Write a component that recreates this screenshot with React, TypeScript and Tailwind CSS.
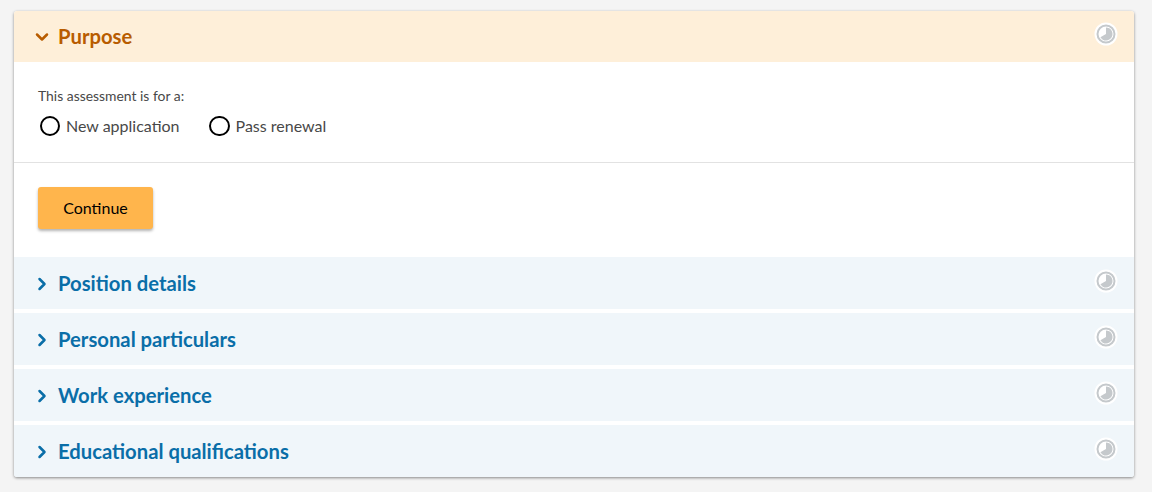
import { ChevronDown, ChevronRight } from "lucide-react";

function ProgressIcon() {
  return (
    <svg width="24" height="24" viewBox="0 0 24 24" className="shrink-0">
      <circle cx="12" cy="12" r="11.5" fill="#fff" />
      <circle cx="12" cy="12" r="8.5" fill="none" stroke="#c5c9cc" strokeWidth="2" />
      <path d="M12 5.5A6.5 6.5 0 1 1 6.4 15.3L12 12Z" fill="#c5c9cc" />
    </svg>
  );
}

function Section({ title }: { title: string }) {
  return (
    <div className="flex h-[52px] items-center justify-between bg-[#f0f6fa] pl-[18px] pr-[16px]">
      <div className="flex items-center gap-[6px]">
        <ChevronRight className="mt-[2px] h-[20px] w-[20px] text-[#0a6ea8]" strokeWidth={3} />
        <h2 className="text-[20.25px] font-bold text-[#0a6ea8]">{title}</h2>
      </div>
      <div className="-mt-[4px]">
        <ProgressIcon />
      </div>
    </div>
  );
}

function Radio({ label }: { label: string }) {
  return (
    <label className="flex items-center gap-[6px] text-[16px] text-[#484848]">
      <span className="h-[20.5px] w-[20.5px] rounded-full border-2 border-black bg-white" />
      {label}
    </label>
  );
}

export default function App() {
  return (
    <div className="h-[492px] overflow-hidden bg-[#f4f4f4] pl-[14px] pr-[18px] pt-[11px] font-['Lato','Open_Sans',sans-serif]">
      <div className="overflow-hidden rounded-[3px] bg-white shadow-[0_1px_3px_rgba(0,0,0,0.45)]">
        <div className="flex h-[51px] items-center justify-between bg-[#feefd9] pl-[18px] pr-[16px]">
          <div className="flex items-center gap-[6px]">
            <ChevronDown className="h-[20px] w-[20px] text-[#b85c00]" strokeWidth={3} />
            <h2 className="text-[20.25px] font-bold text-[#b85c00]">Purpose</h2>
          </div>
          <div className="-mt-[6px]">
            <ProgressIcon />
          </div>
        </div>
        <div className="h-[101px] border-b border-[#e2e2e2] pl-[24px] pt-[25px]">
          <p className="text-[13.9px] leading-[18px] text-[#484848]">This assessment is for a:</p>
          <div className="mt-[9px] flex items-center gap-[29.5px] pl-[1.5px]">
            <Radio label="New application" />
            <Radio label="Pass renewal" />
          </div>
        </div>
        <div className="h-[94px] pl-[24px] pt-[24px]">
          <button className="h-[42px] w-[115px] rounded-[3px] bg-[#ffb54c] text-[16px] text-black shadow-[0_2px_3px_rgba(0,0,0,0.3)]">
            Continue
          </button>
        </div>
        <div className="flex flex-col gap-[4px]">
          <Section title="Position details" />
          <Section title="Personal particulars" />
          <Section title="Work experience" />
          <Section title="Educational qualifications" />
        </div>
      </div>
    </div>
  );
}
